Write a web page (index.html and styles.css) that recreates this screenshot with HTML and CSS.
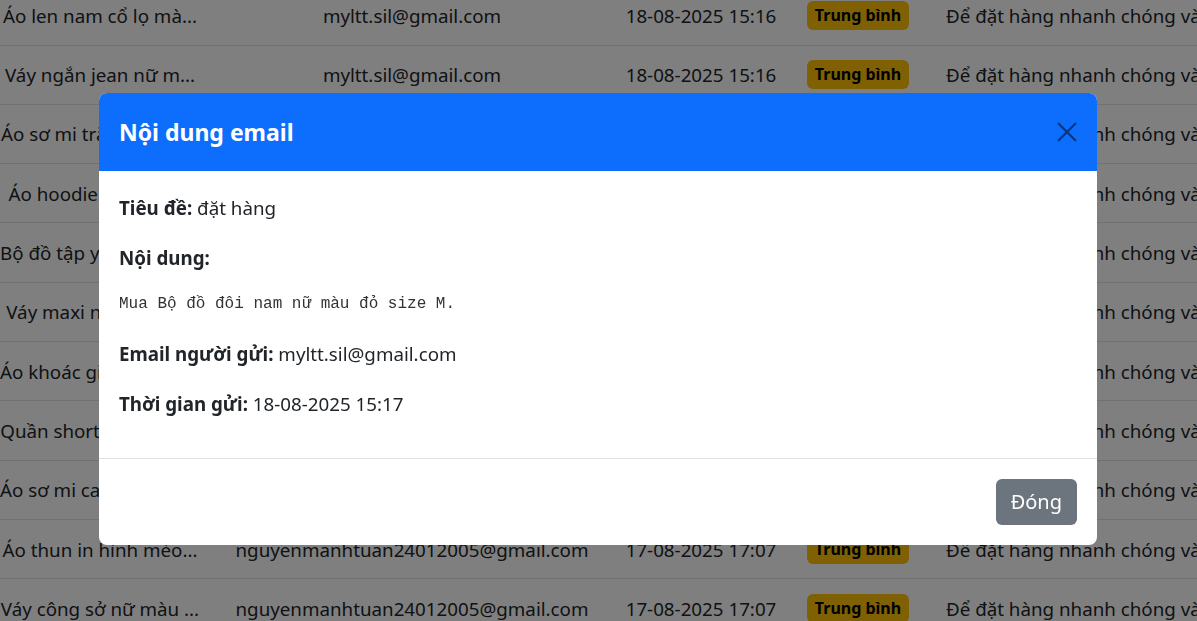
FILE: index.html
```html
<!DOCTYPE html>
<html lang="vi">
<head>
<meta charset="utf-8">
<title>Nội dung email</title>
<link rel="stylesheet" href="styles.css">
</head>
<body>
<div class="page">
  <table class="mail-table">
    <colgroup>
      <col class="c-product"><col class="c-email"><col class="c-date"><col class="c-level"><col class="c-msg">
    </colgroup>
    <tbody>
      <tr><td>Áo len nam cổ lọ mà...</td><td>myltt.sil@gmail.com</td><td>18-08-2025 15:16</td><td><span class="badge">Trung bình</span></td><td class="msg">Để đặt hàng nhanh chóng và thuận tiện</td></tr>
      <tr><td>Váy ngắn jean nữ m...</td><td>myltt.sil@gmail.com</td><td>18-08-2025 15:16</td><td><span class="badge">Trung bình</span></td><td class="msg">Để đặt hàng nhanh chóng và thuận tiện</td></tr>
      <tr><td>Áo sơ mi trắng nữ cổ...</td><td>myltt.sil@gmail.com</td><td>18-08-2025 15:16</td><td><span class="badge">Trung bình</span></td><td class="msg">Để đặt hàng nhanh chóng và thuận tiện</td></tr>
      <tr><td>Áo hoodie nam nữ ...</td><td>myltt.sil@gmail.com</td><td>18-08-2025 15:16</td><td><span class="badge">Trung bình</span></td><td class="msg">Để đặt hàng nhanh chóng và thuận tiện</td></tr>
      <tr><td>Bộ đồ tập yoga nữ mà...</td><td>myltt.sil@gmail.com</td><td>18-08-2025 15:16</td><td><span class="badge">Trung bình</span></td><td class="msg">Để đặt hàng nhanh chóng và thuận tiện</td></tr>
      <tr><td>Váy maxi nữ đi biển...</td><td>myltt.sil@gmail.com</td><td>18-08-2025 15:16</td><td><span class="badge">Trung bình</span></td><td class="msg">Để đặt hàng nhanh chóng và thuận tiện</td></tr>
      <tr><td>Áo khoác gió nam mà...</td><td>myltt.sil@gmail.com</td><td>18-08-2025 15:16</td><td><span class="badge">Trung bình</span></td><td class="msg">Để đặt hàng nhanh chóng và thuận tiện</td></tr>
      <tr><td>Quần short nam kaki...</td><td>myltt.sil@gmail.com</td><td>18-08-2025 15:16</td><td><span class="badge">Trung bình</span></td><td class="msg">Để đặt hàng nhanh chóng và thuận tiện</td></tr>
      <tr><td>Áo sơ mi caro nam tay...</td><td>nguyenmanhtuan24012005@gmail.com</td><td>17-08-2025 17:07</td><td><span class="badge">Trung bình</span></td><td class="msg">Để đặt hàng nhanh chóng và thuận tiện</td></tr>
      <tr><td>Áo thun in hình mèo...</td><td>nguyenmanhtuan24012005@gmail.com</td><td>17-08-2025 17:07</td><td><span class="badge">Trung bình</span></td><td class="msg">Để đặt hàng nhanh chóng và thuận tiện</td></tr>
      <tr><td>Váy công sở nữ màu ...</td><td>nguyenmanhtuan24012005@gmail.com</td><td>17-08-2025 17:07</td><td><span class="badge">Trung bình</span></td><td class="msg">Để đặt hàng nhanh chóng và thuận tiện</td></tr>
      <tr><td>Áo polo nam basic...</td><td>nguyenmanhtuan24012005@gmail.com</td><td>17-08-2025 17:07</td><td><span class="badge">Trung bình</span></td><td class="msg">Để đặt hàng nhanh chóng và thuận tiện</td></tr>
    </tbody>
  </table>
</div>

<div class="backdrop"></div>

<div class="modal" role="dialog">
  <div class="modal-content">
    <div class="modal-header">
      <h5 class="modal-title">Nội dung email</h5>
      <button class="btn-close" type="button" aria-label="Close">
        <svg width="20" height="20" viewBox="0 0 20 20"><path d="M1 1L19 19M19 1L1 19" stroke="currentColor" stroke-width="2.2" fill="none"/></svg>
      </button>
    </div>
    <div class="modal-body">
      <p><strong>Tiêu đề:</strong> đặt hàng</p>
      <p><strong>Nội dung:</strong></p>
      <pre>Mua Bộ đồ đôi nam nữ màu đỏ size M.</pre>
      <p><strong>Email người gửi:</strong> myltt.sil@gmail.com</p>
      <p class="last"><strong>Thời gian gửi:</strong> 18-08-2025 15:17</p>
    </div>
    <div class="modal-footer">
      <button class="btn-secondary" type="button">Đóng</button>
    </div>
  </div>
</div>
</body>
</html>
```

FILE: styles.css
```css
* { box-sizing: border-box; }

html, body {
  margin: 0;
  padding: 0;
  width: 1197px;
  height: 621px;
  overflow: hidden;
  background: #fff;
  font-family: "Noto Sans", "Open Sans", sans-serif;
  color: #212529;
  font-size: 18.75px;
}

.page {
  margin-top: -14.33px;
}

.mail-table {
  border-collapse: collapse;
  width: 1500px;
  table-layout: fixed;
}

.c-product { width: 200px; }
.c-email { width: 424px; }
.c-date { width: 154px; }
.c-level { width: 160px; }
.c-msg { width: 562px; }

.mail-table td {
  height: 59.33px;
  padding: 0;
  border-bottom: 1px solid #dee2e6;
  text-align: center;
  white-space: nowrap;
  vertical-align: middle;
}

.mail-table td.msg {
  text-align: left;
  padding-left: 8px;
  overflow: hidden;
}

.badge {
  display: inline-block;
  background: #ffc107;
  color: #000;
  font-weight: 700;
  font-size: 16px;
  line-height: 29px;
  padding: 0 8px;
  border-radius: 6px;
}

.backdrop {
  position: fixed;
  inset: 0;
  background: rgba(0, 0, 0, 0.5);
}

.modal {
  position: fixed;
  top: 93px;
  left: 99px;
  width: 998px;
}

.modal-content {
  background: #fff;
  border-radius: 8px;
  overflow: hidden;
  display: flex;
  flex-direction: column;
}

.modal-header {
  background: #0d6efd;
  height: 78px;
  padding: 0 20px;
  display: flex;
  align-items: center;
  justify-content: space-between;
}

.modal-title {
  margin: 0;
  font-size: 23px;
  font-weight: 700;
  color: #fff;
  line-height: 36px;
}

.btn-close {
  border: 0;
  background: none;
  padding: 0;
  width: 20px;
  height: 20px;
  color: #06377f;
  display: flex;
}

.modal-body {
  padding: 20px;
  height: 287px;
}

.modal-body p {
  margin: 0 0 16px;
  line-height: 34px;
}

.modal-body p.last { margin-bottom: 0; }

.modal-body strong { font-weight: 700; }

.modal-body pre {
  margin: 0 0 20px;
  font-family: "Liberation Mono", "DejaVu Sans Mono", monospace;
  font-size: 16px;
  line-height: 26px;
  color: #333;
}

.modal-footer {
  border-top: 1px solid #dee2e6;
  padding: 20px;
  display: flex;
  justify-content: flex-end;
}

.btn-secondary {
  background: #6c757d;
  color: #fff;
  border: 0;
  border-radius: 6px;
  font-family: inherit;
  font-size: 20px;
  line-height: 30px;
  padding: 8px 15px;
  height: 46px;
}
```
